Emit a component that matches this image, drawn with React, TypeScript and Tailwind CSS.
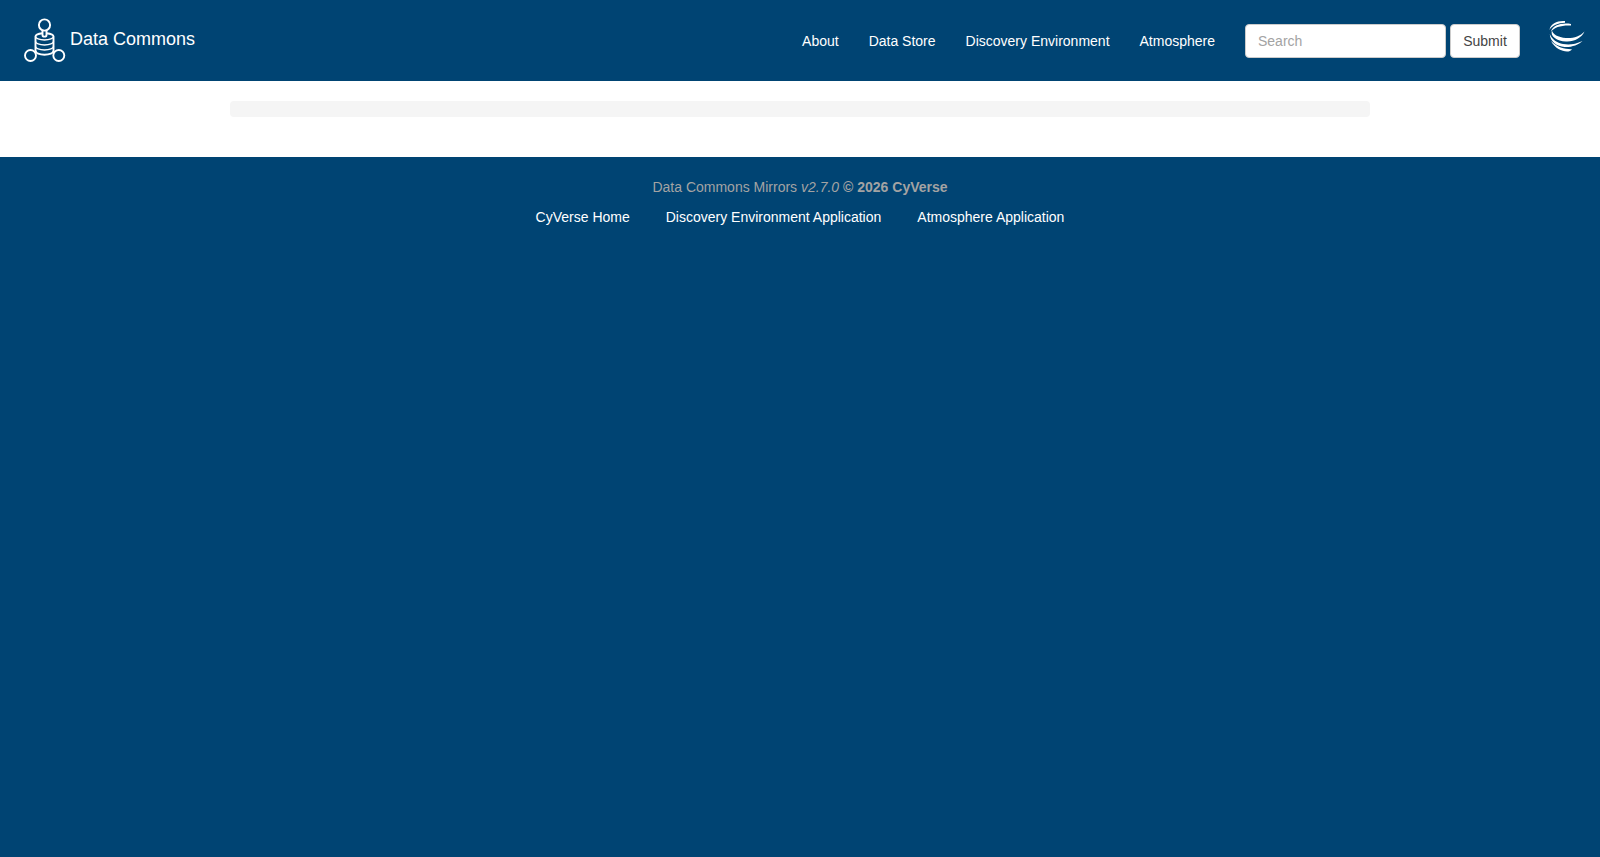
const Logo = () => (
  <svg width="42" height="44" viewBox="0 0 42 44" fill="none" stroke="white" strokeWidth="1.9">
    <circle cx="20.500" cy="7" r="5.600" />
    <path d="M18.500 12.500v4.500c0 2.200 4 2.200 4 0v-4.500" />
    <path d="M18.500 15.200c-3.800 .4-7 1.500-7 3.300v14.800c0 1.900 4 3.400 9 3.400s9-1.500 9-3.400v-14.800c0-1.800-3.200-2.900-7-3.300" />
    <path d="M11.500 18.500c0 1.900 4 3.400 9 3.400s9-1.500 9-3.400" strokeWidth="1.500" />
    <path d="M11.500 23.500c0 1.900 4 3.400 9 3.400s9-1.500 9-3.400" strokeWidth="1.500" />
    <path d="M11.500 28.500c0 1.900 4 3.400 9 3.400s9-1.500 9-3.400" strokeWidth="1.500" />
    <circle cx="6.500" cy="37.500" r="5.500" />
    <circle cx="34.800" cy="37.500" r="5.500" />
    <path d="M11 34.500l1.600-1.200M30.200 34.500l-1.600-1.200" />
  </svg>
)

const CyverseLogo = () => (
  <svg width="36" height="32" viewBox="0 0 36 32" fill="white">
    <path d="M16 1C9 .4 1.500 3 .5 10 3 5.500 9 3 16 2.800z" />
    <path d="M22 4C13 2.500 3.500 5 1.800 12 5 7 13 5 22 5.500z" />
    <path d="M35.500 11.500C31 16.500 24 18.500 17 18 9 17.500 3.500 14 3 10.500 .8 16.500 8 21 17 21.500 25 22 32.500 18 35.500 11.500z" />
    <path d="M33.500 21C26 24.500 20 25 14 24 8 23 3 19.500 .8 14 1 21.500 8 26.500 15.500 27 22 27.500 29.500 25 33.500 21z" />
    <path d="M23 29.200C17 29.500 8 27.500 2 21 5.500 28 13 31.500 18 31.500 20 31.500 22 30.800 23 29.200z" />
  </svg>
)

const navLinks = ["About", "Data Store", "Discovery Environment", "Atmosphere"]
const footerLinks = ["CyVerse Home", "Discovery Environment Application", "Atmosphere Application"]

export default function App() {
  return (
    <div className="min-h-screen flex flex-col bg-white font-['Liberation_Sans',Arial,sans-serif] text-sm">
      {/* navbar */}
      <nav className="h-[81px] bg-[#004473] flex items-center text-white">
        <a href="#" className="ml-[24px] mb-[1px] flex items-center">
          <Logo />
          <span className="ml-[4px] mb-[2px] text-lg">Data Commons</span>
        </a>
        <div className="ml-auto flex items-center">
          {navLinks.map((l) => (
            <a key={l} href="#" className="px-[15px]">{l}</a>
          ))}
        </div>
        <div className="ml-[15px] flex items-center gap-[4px]">
          <input
            placeholder="Search"
            className="w-[201px] h-[34px] px-[12px] bg-white rounded border border-[#ccc] text-[#555] placeholder:text-[#a3a3a3] outline-none"
          />
          <button className="w-[70px] h-[34px] bg-white rounded border border-[#ccc] text-[#444]">Submit</button>
        </div>
        <div className="ml-[29px] mr-[15px] mb-[9px] flex">
          <CyverseLogo />
        </div>
      </nav>

      {/* content */}
      <main className="h-[76px] bg-white pt-[20px]">
        <div className="w-[1140px] h-[16px] mx-auto bg-[#f5f5f5] rounded"></div>
      </main>

      {/* footer */}
      <footer className="flex-1 bg-[#004473] pt-[20px]">
        <p className="text-center text-[#a3a3a3] leading-5">
          Data Commons Mirrors <em>v2.7.0</em> <strong>© 2026 CyVerse</strong>
        </p>
        <div className="mt-[10px] flex justify-center gap-[36px] text-white leading-5">
          {footerLinks.map((l) => (
            <a key={l} href="#">{l}</a>
          ))}
        </div>
      </footer>
    </div>
  )
}
